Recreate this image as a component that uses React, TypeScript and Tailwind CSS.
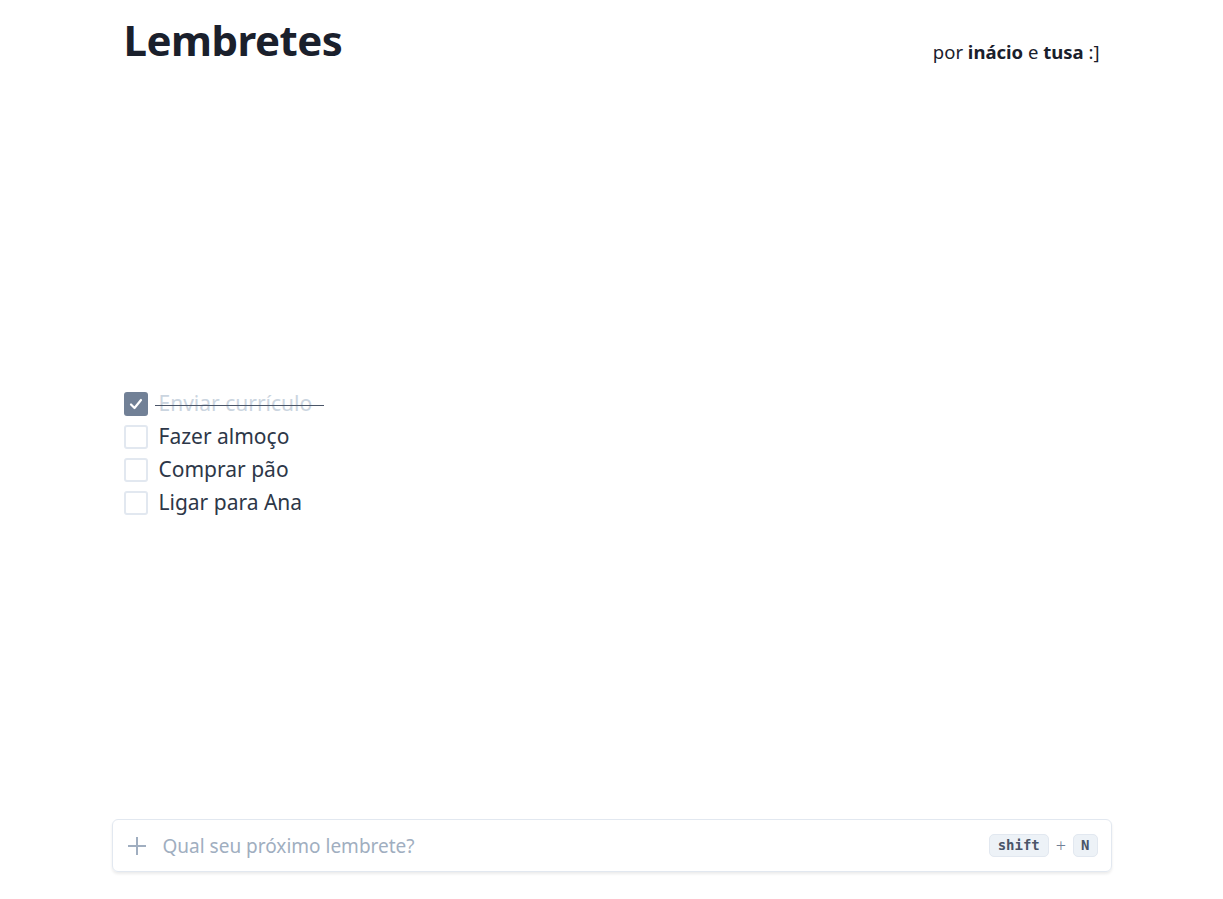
import React from "react";

const items = [
  { text: "Enviar currículo", done: true },
  { text: "Fazer almoço", done: false },
  { text: "Comprar pão", done: false },
  { text: "Ligar para Ana", done: false },
];

export default function App() {
  return (
    <div
      className="h-screen flex flex-col bg-white text-[#1a202c]"
      style={{ fontFamily: '"Noto Sans", "Open Sans", sans-serif' }}
    >
      <div className="w-[1000px] mx-auto px-3 pt-[10px] flex justify-between items-start">
        <h1 className="text-[42px] font-bold leading-[60px] tracking-[-0.5px] text-[#1a202c]">Lembretes</h1>
        <p className="mt-[28px] text-[18.5px] text-[#1a202c]">
          por <b>inácio</b> e <b>tusa</b> :]
        </p>
      </div>
      <div className="flex-1 w-[1000px] mx-auto px-3 flex flex-col justify-center pt-[18px]">
        <ul className="flex flex-col gap-[9px]">
          {items.map((it) => (
            <li key={it.text} className="flex items-center gap-[11px] h-[24px]">
              {it.done ? (
                <span className="w-[24px] h-[24px] rounded-[3px] bg-[#718096] flex items-center justify-center">
                  <svg width="16" height="16" viewBox="0 0 16 16" fill="none">
                    <path d="M3 8.5 L6.5 12 L13 4" stroke="white" strokeWidth="2.2" strokeLinecap="round" strokeLinejoin="round" />
                  </svg>
                </span>
              ) : (
                <span className="w-[24px] h-[24px] rounded-[3px] border-2 border-[#e2e8f0] bg-white" />
              )}
              {it.done ? (
                <span className="relative text-[21px] text-[#cbd5e0]">
                  {it.text}
                  <span className="absolute left-[-4px] right-[-12px] top-[53%] h-[1.5px] bg-[#4a5568]" />
                </span>
              ) : (
                <span className="text-[21px] text-[#2d3748]">{it.text}</span>
              )}
            </li>
          ))}
        </ul>
      </div>
      <div className="w-[1000px] mx-auto mb-[27px]">
        <div className="h-[53px] rounded-md border border-[#e2e8f0] shadow-[0_2px_3px_rgba(0,0,0,0.08)] flex items-center pl-[14px] pr-[13px]">
          <svg width="20" height="20" viewBox="0 0 20 20" className="shrink-0">
            <path d="M10 1 V19 M1 10 H19" stroke="#a0aec0" strokeWidth="2" />
          </svg>
          <span className="ml-[16px] mt-[2px] text-[19px] text-[#a0aec0] flex-1">Qual seu próximo lembrete?</span>
          <kbd className="px-[8px] h-[23px] flex items-center rounded-[5px] bg-[#edf2f7] border border-[#e2e8f0] text-[14px] font-bold text-[#4a5568]" style={{ fontFamily: '"DejaVu Sans Mono", monospace' }}>shift</kbd>
          <span className="mx-[7px] text-[18px] font-light text-[#718096]">+</span>
          <kbd className="px-[7px] h-[23px] flex items-center rounded-[5px] bg-[#edf2f7] border border-[#e2e8f0] text-[14px] font-bold text-[#4a5568]" style={{ fontFamily: '"DejaVu Sans Mono", monospace' }}>N</kbd>
        </div>
      </div>
    </div>
  );
}
